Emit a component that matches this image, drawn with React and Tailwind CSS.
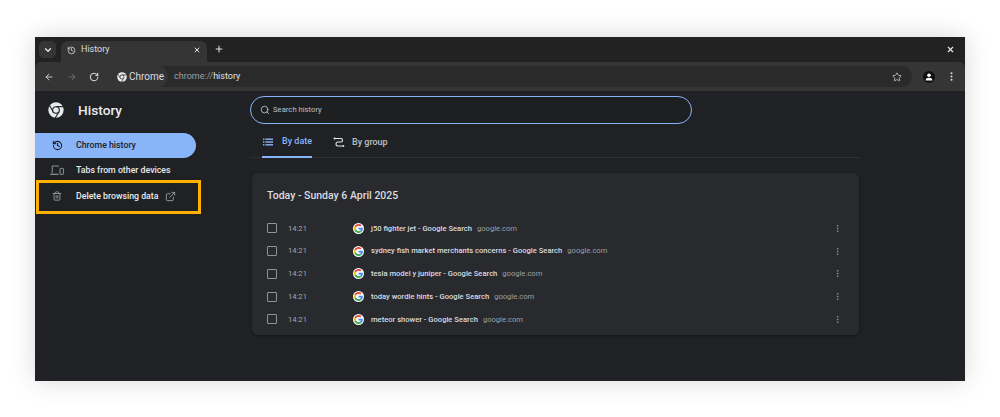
import React from "react";
import {
  ArrowLeft,
  ArrowRight,
  ChevronDown,
  EllipsisVertical,
  ExternalLink,
  History,
  Plus,
  RotateCw,
  Search,
  Star,
  Trash2,
  X,
} from "lucide-react";

const rows = [
  { title: "j50 fighter jet - Google Search" },
  { title: "sydney fish market merchants concerns - Google Search" },
  { title: "tesla model y juniper - Google Search" },
  { title: "today wordle hints - Google Search" },
  { title: "meteor shower - Google Search" },
];

const ChromeLogo = ({ size, bg }) => (
  <svg width={size} height={size} viewBox="0 0 24 24" className="shrink-0">
    <circle cx="12" cy="12" r="11.5" fill="#e8eaed" />
    <path d="M12 7 H23" stroke={bg} strokeWidth="1.7" />
    <path d="M7.7 14.5 L2.2 5" stroke={bg} strokeWidth="1.7" />
    <path d="M16.3 14.5 L10.8 24" stroke={bg} strokeWidth="1.7" />
    <circle cx="12" cy="12" r="5.8" fill={bg} />
    <circle cx="12" cy="12" r="4.1" fill="#e8eaed" />
  </svg>
);

const GoogleIcon = () => (
  <div className="w-[11px] h-[11px] rounded-full bg-white flex items-center justify-center shrink-0">
    <svg width="9" height="9" viewBox="0 0 48 48">
      <path fill="#EA4335" d="M24 9.5c3.5 0 6.7 1.2 9.2 3.6l6.9-6.9C35.9 2.4 30.5 0 24 0 14.6 0 6.5 5.4 2.6 13.2l8 6.2C12.5 13.7 17.8 9.5 24 9.5z" />
      <path fill="#4285F4" d="M47 24.5c0-1.6-.1-3.1-.4-4.5H24v9h13c-.6 3-2.2 5.5-4.8 7.2l7.7 6c4.5-4.2 7.1-10.3 7.1-17.7z" />
      <path fill="#FBBC05" d="M10.5 28.6c-.5-1.4-.8-3-.8-4.6s.3-3.2.8-4.6l-8-6.2C.9 16.5 0 20.1 0 24s.9 7.5 2.6 10.8l7.9-6.2z" />
      <path fill="#34A853" d="M24 48c6.5 0 11.9-2.1 15.9-5.8l-7.7-6c-2.2 1.4-4.9 2.3-8.2 2.3-6.2 0-11.5-4.2-13.4-9.9l-8 6.2C6.5 42.6 14.6 48 24 48z" />
    </svg>
  </div>
);

const GroupIcon = () => (
  <svg width="12" height="12" viewBox="0 0 12 12" fill="none" stroke="#e8eaed" strokeWidth="1.1" className="shrink-0">
    <path d="M2 1.5 H8 Q9.5 1.5 9.5 3.2 Q9.5 5 8 5 H4.5 Q3 5 3 7 Q3 9 4.5 9 H9.5" />
    <circle cx="1.6" cy="1.5" r="1" fill="#e8eaed" stroke="none" />
    <circle cx="10.3" cy="9" r="1" fill="#e8eaed" stroke="none" />
  </svg>
);

const DevicesIcon = () => (
  <svg width="14" height="11" viewBox="0 0 14 11" fill="none" stroke="#9aa0a6" strokeWidth="0.9" className="shrink-0">
    <path d="M9 1 H2.2 V8.2" />
    <path d="M0.3 9.3 H8.6" strokeWidth="1.1" />
    <rect x="10" y="3.4" width="3.4" height="6" rx="0.5" />
  </svg>
);

const ListIcon = () => (
  <svg width="10" height="8" viewBox="0 0 10 8" fill="#8ab4f8" className="shrink-0">
    <rect x="0" y="0.5" width="1.4" height="1.4" />
    <rect x="2.4" y="0.5" width="7.6" height="1.4" />
    <rect x="0" y="3.3" width="1.4" height="1.4" />
    <rect x="2.4" y="3.3" width="7.6" height="1.4" />
    <rect x="0" y="6.1" width="1.4" height="1.4" />
    <rect x="2.4" y="6.1" width="7.6" height="1.4" />
  </svg>
);

const PersonIcon = () => (
  <svg width="8" height="8" viewBox="0 0 8 8" fill="#fff">
    <circle cx="4" cy="2.2" r="1.8" />
    <path d="M0.6 7.6 C0.6 5.4 2.2 4.8 4 4.8 C5.8 4.8 7.4 5.4 7.4 7.6 Z" />
  </svg>
);

const HistoryRow = ({ title }) => (
  <div className="h-[22.75px] flex items-center pl-[15px] pr-[17px]">
    <div className="w-[10px] h-[10px] rounded-[1px] border-[1.2px] border-[#8f9296] shrink-0" />
    <span className="ml-[11px] w-[65px] text-[7.6px] text-[#a4a7ab]">14:21</span>
    <GoogleIcon />
    <span className="ml-[7px] text-[7.6px] font-medium text-[#dadce0] whitespace-nowrap">{title}</span>
    <span className="ml-[5px] text-[7.6px] text-[#9aa0a6]">google.com</span>
    <EllipsisVertical size={9} className="ml-auto text-[#9aa0a6]" />
  </div>
);

export default function App() {
  return (
    <div className="w-[1000px] h-[417px] bg-white pt-[37px] pl-[35px] font-['Roboto',sans-serif] overflow-hidden">
      <div className="w-[930px] h-[344px] flex flex-col bg-[#202124] shadow-[0_0_24px_rgba(0,0,0,0.16)]">
        {/* tab strip */}
        <div className="h-[25px] bg-[#222222] flex items-end pl-[4px] pr-[11px] shrink-0">
          <div className="w-[17px] h-[17px] mb-[4px] rounded-[5px] bg-[#353535] flex items-center justify-center">
            <ChevronDown size={10} strokeWidth={3} className="text-[#e8eaed]" />
          </div>
          <div className="ml-[5px] w-[146px] h-[21px] bg-[#353535] rounded-t-[7px] flex items-center pl-[6px] pr-[6px] pb-[3px]">
            <History size={9} strokeWidth={2} className="text-[#e3e3e3]" />
            <span className="ml-[5px] text-[9px] text-[#dadce0]">History</span>
            <X size={8} strokeWidth={3} className="ml-auto text-[#e3e3e3]" />
          </div>
          <Plus size={10} strokeWidth={2.5} className="ml-[7px] mb-[8px] text-[#e3e3e3]" />
          <X size={9} strokeWidth={3} className="ml-auto mb-[8px] mr-[-1px] text-[#e8eaed]" />
        </div>

        {/* toolbar */}
        <div className="h-[29px] bg-[#353535] rounded-t-[6px] flex items-center pl-[9px] shrink-0">
          <ArrowLeft size={10} strokeWidth={2} className="text-[#e3e3e3]" />
          <ArrowRight size={10} strokeWidth={2} className="ml-[13px] text-[#757575]" />
          <RotateCw size={10} strokeWidth={2.4} className="ml-[12px] text-[#e3e3e3]" />
          <div className="ml-[13px] w-[800px] h-[21px] rounded-full bg-[#2a2a2a] flex items-center pr-[10px] shrink-0">
            <div className="h-[21px] pl-[5px] pr-[4px] rounded-full bg-[#353535] flex items-center gap-[2px]">
              <ChromeLogo size={10} bg="#353535" />
              <span className="text-[10px] text-[#dadce0]">Chrome</span>
            </div>
            <span className="ml-[6px] text-[9px] text-[#9aa0a6]">
              chrome://<span className="text-[#e3e3e3]">history</span>
            </span>
            <Star size={10} strokeWidth={2} className="ml-auto text-[#c7c7c7]" />
          </div>
          <div className="ml-[11px] w-[12px] h-[12px] rounded-full bg-[#111111] flex items-center justify-center shrink-0">
            <PersonIcon />
          </div>
          <EllipsisVertical size={11} strokeWidth={2.5} className="ml-[11px] text-[#dadce0] shrink-0" />
        </div>

        {/* content */}
        <div className="flex-1 flex min-h-0">
          <aside className="w-[215px] shrink-0">
            <div className="h-[38px] mb-[4px] flex items-center pl-[13px]">
              <ChromeLogo size={16} bg="#202124" />
              <span className="ml-[14px] text-[13.7px] font-medium text-[#e8eaed]">History</span>
            </div>
            <nav className="text-[8.75px] font-medium">
              <div className="w-[161px] h-[25px] rounded-r-full bg-[#8ab4f8] flex items-center pl-[17px] text-[#202124]">
                <History size={11} strokeWidth={2.4} />
                <span className="ml-[13px]">Chrome history</span>
              </div>
              <div className="w-[161px] h-[25.5px] flex items-center pl-[15px] text-[#e8eaed]">
                <DevicesIcon />
                <span className="ml-[12px]">Tabs from other devices</span>
              </div>
              <div className="relative w-[161px] h-[25.5px] flex items-center pl-[17px] text-[#e8eaed]">
                <Trash2 size={10} className="text-[#9aa0a6]" />
                <span className="ml-[14px] whitespace-nowrap">Delete browsing data</span>
                <ExternalLink size={11} className="ml-[7px] text-[#9aa0a6]" />
                <div className="absolute left-[1px] top-[-3.5px] w-[165px] h-[34px] border-[3px] border-[#ffb000]" />
              </div>
            </nav>
          </aside>

          <main className="w-[610px] pt-[5px]">
            <div className="w-[442px] h-[28px] rounded-full border-[1.5px] border-[#8ab4f8] bg-[#1e1f21] flex items-center pl-[9px]">
              <Search size={10} strokeWidth={2} className="text-[#c4c7c5]" />
              <span className="ml-[3px] text-[7.7px] text-[#bdc1c6]">Search history</span>
            </div>

            <div className="mt-[9px] h-[25px] border-b border-[#2e2f32] flex text-[9px] font-medium whitespace-nowrap">
              <div className="ml-[12px] h-[25px] w-[50px] border-b-[2px] border-[#8ab4f8] flex items-center text-[#8ab4f8] pb-[5px] pl-[1px]">
                <ListIcon />
                <span className="ml-[9px]">By date</span>
              </div>
              <div className="ml-[21px] h-[25px] flex items-center text-[#bdc1c6] pb-[5px]">
                <GroupIcon />
                <span className="ml-[7px]">By group</span>
              </div>
            </div>

            <section className="mt-[15px] ml-[2px] w-[607px] h-[162px] rounded-[6px] bg-[#292a2d] shadow-[0_1px_3px_rgba(0,0,0,0.35)]">
              <h2 className="h-[44px] pl-[15px] pt-[2px] flex items-center text-[10.5px] font-medium text-[#dadce0]">
                Today - Sunday 6 April 2025
              </h2>
              {rows.map((row) => (
                <HistoryRow key={row.title} title={row.title} />
              ))}
            </section>
          </main>
        </div>
      </div>
    </div>
  );
}
